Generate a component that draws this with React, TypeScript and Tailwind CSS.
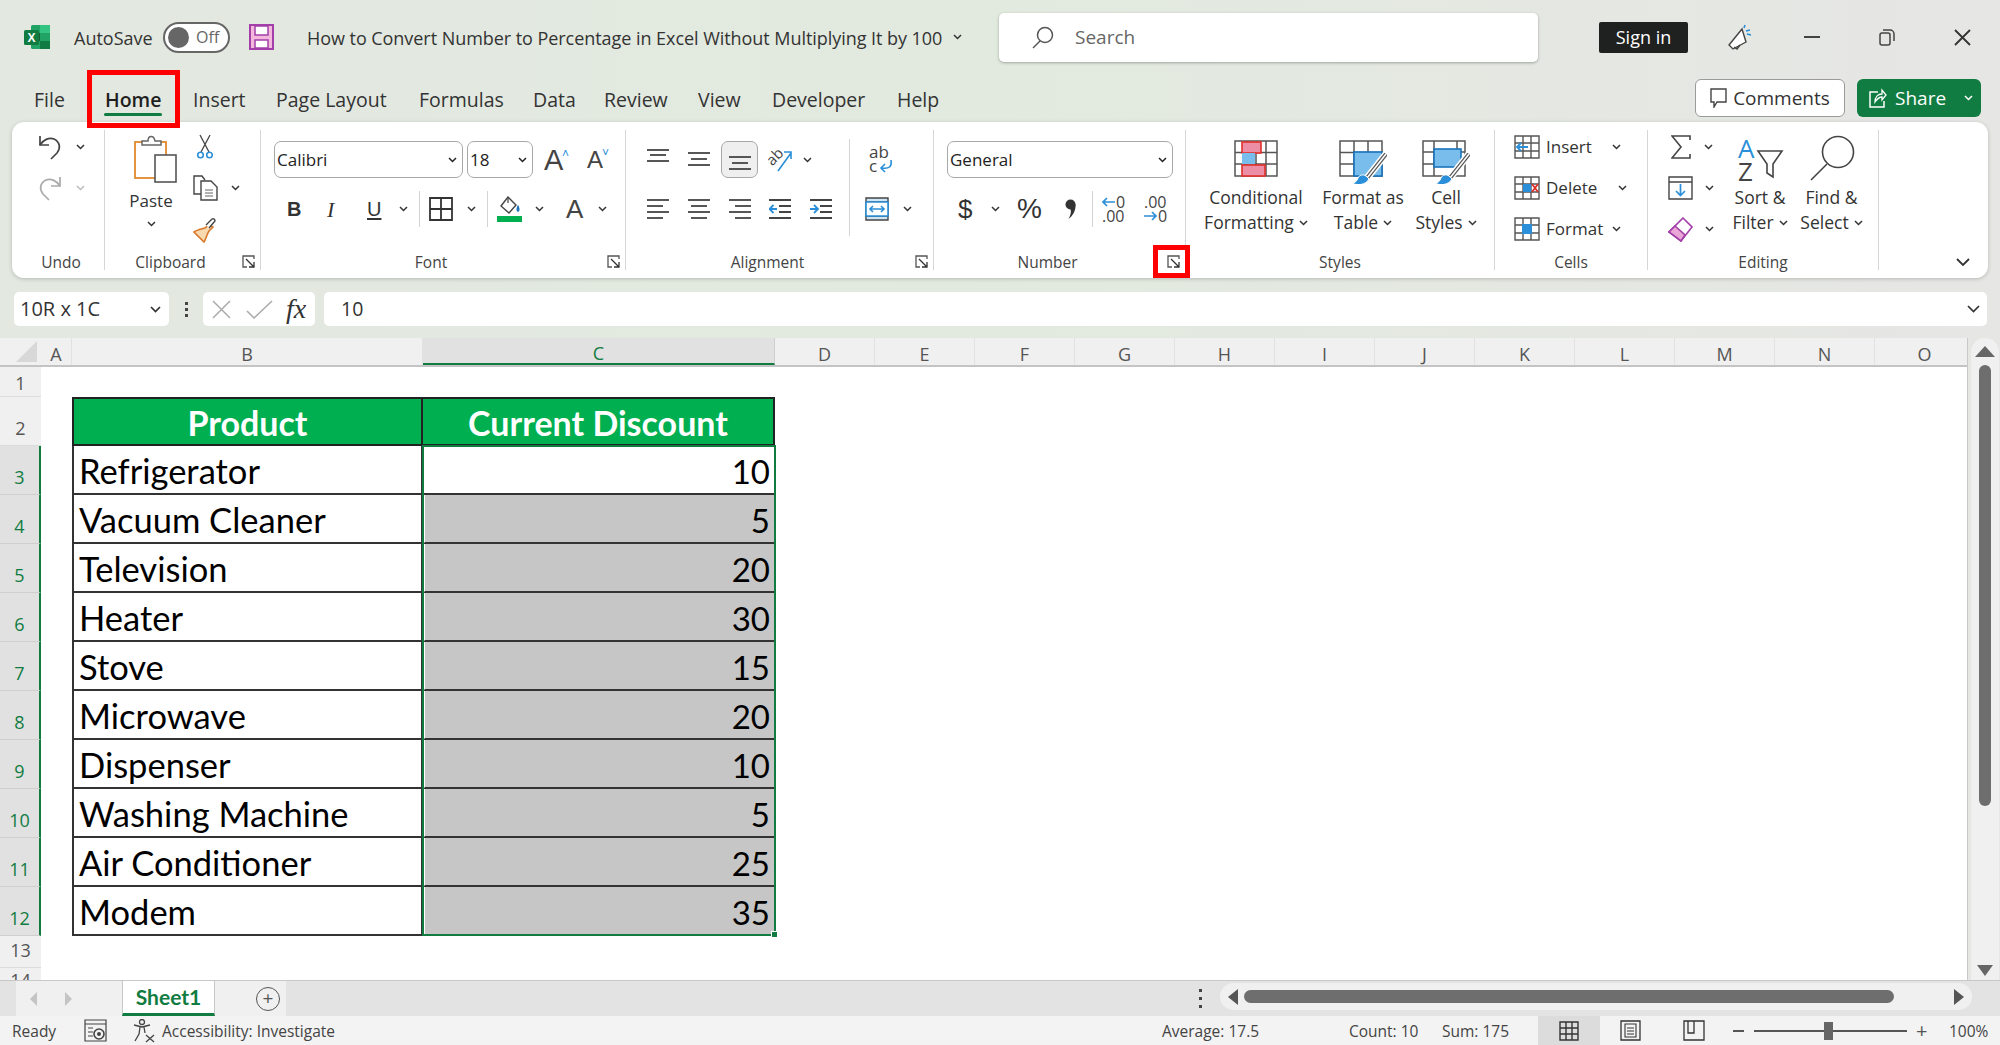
import { FC, ReactNode } from "react";

const ui = "font-['Open_Sans',sans-serif]";

// small dropdown chevron
const Chev: FC<{ cls?: string; color?: string }> = ({ cls = "", color = "#333" }) => (
	<svg width="9" height="6" viewBox="0 0 9 6" className={`shrink-0 ${cls}`}>
		<path d="M1 1l3.5 3.5L8 1" fill="none" stroke={color} strokeWidth="1.5" />
	</svg>
);

const Launcher: FC = () => (
	<svg width="13" height="13" viewBox="0 0 13 13" className="absolute right-[5px] top-[9px]">
		<path d="M12 4V1H1v11h4" fill="none" stroke="#555" strokeWidth="1.3" />
		<path d="M4 4l8 8M12 7v5H7" fill="none" stroke="#333" strokeWidth="1.3" />
	</svg>
);

const Sep: FC<{ cls?: string }> = ({ cls = "" }) => <div className={`w-px h-[36px] bg-[#d4d4d4] shrink-0 ${cls}`} />;

const Group: FC<{ w: string; label: string; launcher?: boolean; labelCls?: string; children: ReactNode }> = ({ w, label, launcher, labelCls = "", children }) => (
	<div className={`${w} shrink-0 h-full flex flex-col border-r border-[#d6d6d6]`}>
		<div className="h-[120px] flex">{children}</div>
		<div className={`relative h-[24px] pt-[4px] text-center text-[15.5px] leading-[24px] text-[#444] ${labelCls}`}>
			{label}
			{launcher && <Launcher />}
		</div>
	</div>
);

// fake select box used in the ribbon
const Select: FC<{ w: string; ml: string; text: string }> = ({ w, ml, text }) => (
	<div className={`${w} ${ml} h-[37px] shrink-0 flex items-center justify-between bg-white border border-[#a8a8a8] rounded-[7px] pl-[2px] pr-[5px] text-[17px] text-[#222]`}>
		<span>{text}</span>
		<Chev color="#222" />
	</div>
);

// [x, width, y] for each bar of an alignment icon
const AlignLines: FC<{ lines: [number, number, number][] }> = ({ lines }) => (
	<svg width="22" height="22" viewBox="0 0 22 22" className="shrink-0">
		{lines.map(([x, w, y], i) => (
			<path key={i} d={`M${x} ${y}h${w}`} stroke="#444" strokeWidth="1.8" />
		))}
	</svg>
);

const Indent: FC<{ flip?: boolean }> = ({ flip }) => (
	<svg width="22" height="22" viewBox="0 0 22 22" className="shrink-0">
		<path d="M0 2h22M10 8h12M10 14h12M0 20h22" stroke="#444" strokeWidth="1.8" />
		{flip ? (
			<path d="M0 11h7M4 7l4 4-4 4" fill="none" stroke="#2a8fd8" strokeWidth="1.8" />
		) : (
			<path d="M8 11H1M4.5 7l-4 4 4 4" fill="none" stroke="#2a8fd8" strokeWidth="1.8" />
		)}
	</svg>
);

const ExcelLogo = () => (
	<svg width="26" height="26" viewBox="0 0 26 26" className="shrink-0">
		<rect x="7" y="1" width="19" height="24" rx="1.5" fill="#21a366" />
		<rect x="16" y="1" width="10" height="8" fill="#33c481" />
		<rect x="16" y="17" width="10" height="8" fill="#107c41" />
		<rect x="7" y="9" width="9" height="8" fill="#185c37" />
		<rect x="0" y="6" width="15" height="15" rx="1.5" fill="#107c41" />
		<text x="7.5" y="18" textAnchor="middle" fontSize="12" fontWeight="700" fill="#fff" fontFamily="Liberation Sans, sans-serif">X</text>
	</svg>
);

const SaveIcon = () => (
	<svg width="25" height="26" viewBox="0 0 25 26" className="shrink-0">
		<path d="M1 1h23v24H1z" fill="#f3b8dc" stroke="#a23fa8" strokeWidth="2" />
		<rect x="6" y="2" width="13" height="9" fill="#fff" stroke="#a23fa8" strokeWidth="1.5" />
		<rect x="6" y="16" width="13" height="8" fill="#fff" stroke="#a23fa8" strokeWidth="1.5" />
	</svg>
);

const CondFmtIcon = () => (
	<svg width="45" height="37" viewBox="0 0 45 37">
		<path d="M1 1h42v35H1zM1 12.5h42M1 24h42M12 1v35M22 1v35M32 1v35" fill="#fff" stroke="#555" strokeWidth="1.5" />
		<rect x="8" y="2" width="19" height="11" fill="#ec8fa6" stroke="#e0302a" strokeWidth="1.6" />
		<rect x="8" y="13" width="13" height="11" fill="#78bdeb" />
		<rect x="8" y="25" width="23" height="11" fill="#ec8fa6" stroke="#e0302a" strokeWidth="1.6" />
	</svg>
);

const Brush = () => (
	<>
		<path d="M47 14L28 38" stroke="#fff" strokeWidth="7" />
		<path d="M47 14L28 38" stroke="#555" strokeWidth="4" />
		<path d="M47 14L28 38" stroke="#fff" strokeWidth="1.6" />
		<path d="M27 36c-3-2-7-1-8 2-1 3-3 5-6 5 5 3 14 2 17-4z" fill="#2a8fd8" stroke="#fff" strokeWidth="1" />
	</>
);

const FmtTableIcon = () => (
	<svg width="48" height="44" viewBox="0 0 48 44">
		<path d="M1 1h42v35H1zM1 12.5h42M1 24h42M15 1v35M29 1v35" fill="#fff" stroke="#555" strokeWidth="1.5" />
		<rect x="15" y="12" width="28" height="24" fill="#78bdeb" stroke="#1a73bb" strokeWidth="1.6" />
		<Brush />
	</svg>
);

const CellStyleIcon = () => (
	<svg width="48" height="44" viewBox="0 0 48 44">
		<path d="M1 1h42v35H1zM1 12h42M1 24h14M12 1v35M35 1v11" fill="#fff" stroke="#555" strokeWidth="1.5" />
		<rect x="12" y="9" width="27" height="18" fill="#78bdeb" stroke="#1a73bb" strokeWidth="1.6" />
		<Brush />
	</svg>
);

const GridCell: FC<{ children?: ReactNode }> = ({ children }) => (
	<svg width="26" height="24" viewBox="0 0 26 24" className="shrink-0">
		<path d="M1 1h24v22H1zM1 8h24M1 16h24M9 1v22M17 1v22" fill="#fff" stroke="#555" strokeWidth="1.4" />
		{children}
	</svg>
);

const Styled: FC<{ w: string; ml?: string; icon: ReactNode; l1: string; l2: string }> = ({ w, ml = "", icon, l1, l2 }) => (
	<div className={`${w} ${ml} shrink-0 flex flex-col items-center`}>
		<div className="h-[55px] pt-[10px] flex items-start">{icon}</div>
		<div className="text-[17.5px] leading-[25px] text-[#333] whitespace-nowrap">{l1}</div>
		<div className="text-[17.5px] leading-[25px] text-[#333] whitespace-nowrap flex items-center gap-[5px]">
			{l2}
			<Chev />
		</div>
	</div>
);

const tabs: [string, string][] = [
	["File", "w-[71px]"],
	["Home", "w-[88px]"],
	["Insert", "w-[83px]"],
	["Page Layout", "w-[143px]"],
	["Formulas", "w-[114px]"],
	["Data", "w-[71px]"],
	["Review", "w-[94px]"],
	["View", "w-[74px]"],
	["Developer", "w-[125px]"],
	["Help", "w-[60px]"],
];

const colHeaders: [string, string][] = [
	["A", "w-[31px]"],
	["B", "w-[351px]"],
	["C", "w-[352px]"],
	["D", "w-[100px]"],
	["E", "w-[100px]"],
	["F", "w-[100px]"],
	["G", "w-[100px]"],
	["H", "w-[100px]"],
	["I", "w-[100px]"],
	["J", "w-[100px]"],
	["K", "w-[100px]"],
	["L", "w-[100px]"],
	["M", "w-[100px]"],
	["N", "w-[100px]"],
	["O", "w-[100px]"],
];

const products: [string, number][] = [
	["Refrigerator", 10],
	["Vacuum Cleaner", 5],
	["Television", 20],
	["Heater", 30],
	["Stove", 15],
	["Microwave", 20],
	["Dispenser", 10],
	["Washing Machine", 5],
	["Air Conditioner", 25],
	["Modem", 35],
];

const RowHead: FC<{ n: number; h: string; pb?: string; sel?: boolean }> = ({ n, h, pb = "pb-[5px]", sel }) => (
	<div className={`${h} ${pb} w-[41px] shrink-0 flex items-end justify-center text-[18px] leading-[24px] border-b ${sel ? "bg-[#e1e1e1] text-[#107c41] border-[#cfcfcf] border-r-2 border-r-[#107c41]" : "bg-[#f0f0f0] text-[#555] border-[#dcdcdc]"}`}>
		{n}
	</div>
);

export default function App() {
	return (
		<div className={`relative w-[2000px] h-[1045px] overflow-hidden flex flex-col bg-gradient-to-r from-[#e3e8e1] via-[#e2eadf] to-[#e6e6e4] ${ui}`}>
			{/* Title bar */}
			<div className="h-[72px] shrink-0 flex items-center text-[#333] pt-[2px]">
				<div className="ml-[24px]"><ExcelLogo /></div>
				<div className="ml-[24px] w-[79px] pt-[2px] text-[18px] whitespace-nowrap">AutoSave</div>
				<div className="ml-[10px] w-[67px] h-[31px] rounded-full border-2 border-[#666] bg-white flex items-center pl-[3px] gap-[7px] text-[16px] text-[#666]">
					<div className="w-[21px] h-[21px] rounded-full bg-[#666]" />
					Off
				</div>
				<div className="ml-[19px]"><SaveIcon /></div>
				<div className="ml-[33px] w-[634px] pt-[2px] text-[18px] whitespace-nowrap tracking-[-0.05px]">How to Convert Number to Percentage in Excel Without Multiplying It by 100</div>
				<Chev cls="ml-[12px]" />
				<div className="ml-[37px] w-[539px] h-[49px] bg-white rounded-[5px] shadow-[0_1px_3px_rgba(0,0,0,0.3)] flex items-center pl-[33px] text-[19px] text-[#666]">
					<svg width="22" height="23" viewBox="0 0 22 23" className="shrink-0">
						<circle cx="13" cy="9" r="7.5" fill="none" stroke="#555" strokeWidth="1.5" />
						<path d="M8 15l-7 7" stroke="#555" strokeWidth="1.5" />
					</svg>
					<span className="ml-[21px]">Search</span>
				</div>
				<div className="ml-[61px] w-[89px] h-[31px] bg-[#1f2020] rounded-[2px] text-white text-[18px] flex items-center justify-center">Sign in</div>
				<svg width="24" height="26" viewBox="0 0 24 26" className="ml-[40px] shrink-0">
					<path d="M14 5L1 21l4 4 13-7z" fill="#fff" stroke="#444" strokeWidth="1.4" />
					<path d="M6 23l3 2 3-4" fill="none" stroke="#444" strokeWidth="1.4" />
					<path d="M18 7l4-1M16 4l1-3M19 10l4 1" stroke="#2a8fd8" strokeWidth="1.6" />
				</svg>
				<div className="ml-[52px] w-[16px] h-[2px] bg-[#444]" />
				<svg width="16" height="17" viewBox="0 0 16 17" className="ml-[59px] shrink-0">
					<rect x="1" y="4" width="10" height="12" rx="2" fill="none" stroke="#444" strokeWidth="1.5" />
					<path d="M4 1h7a4 4 0 0 1 4 4v7" fill="none" stroke="#444" strokeWidth="1.5" />
				</svg>
				<svg width="17" height="17" viewBox="0 0 17 17" className="ml-[59px] shrink-0">
					<path d="M1 1l15 15M16 1L1 16" stroke="#333" strokeWidth="1.8" />
				</svg>
			</div>

			{/* Menu tabs */}
			<div className="h-[50px] shrink-0 flex pl-[34px] pt-[7px] text-[19.5px] text-[#333]">
				{tabs.map(([t, w]) => (
					<div key={t} className={`${w} shrink-0 whitespace-nowrap pt-[6px]`}>
						<span className={t === "Home" ? "relative font-semibold text-[#1f1f1f]" : ""}>
							{t}
							{t === "Home" && <span className="absolute left-[-1px] right-[-1px] top-[27px] h-[3px] rounded-full bg-[#107c41]" />}
						</span>
					</div>
				))}
				<div className="ml-[738px] w-[150px] h-[38px] bg-white border border-[#9a9a9a] rounded-[6px] flex items-center justify-center gap-[6px] text-[19px] shrink-0">
					<svg width="17" height="20" viewBox="0 0 17 20">
						<path d="M1 1h15v13H7l-3 5v-5H1z" fill="none" stroke="#444" strokeWidth="1.4" />
					</svg>
					Comments
				</div>
				<div className="ml-[12px] w-[124px] h-[38px] bg-[#107c41] rounded-[6px] flex items-center pl-[12px] text-white text-[19px] shrink-0">
					<svg width="18" height="20" viewBox="0 0 18 20" className="shrink-0">
						<path d="M9 4H1v15h14v-6" fill="none" stroke="#fff" strokeWidth="1.5" />
						<path d="M6 14c0-5 3-8 7-8V2l4 5-4 5V9c-3 0-5 2-7 5z" fill="none" stroke="#fff" strokeWidth="1.3" />
					</svg>
					<span className="ml-[8px] w-[51px]">Share</span>
					<Chev cls="ml-[18px]" color="#fff" />
				</div>
			</div>

			{/* Ribbon */}
			<div className="h-[156px] shrink-0 mx-[12px] bg-white rounded-[12px] shadow-[0_1px_4px_rgba(0,0,0,0.2)] py-[8px] flex">
				<Group w="w-[93px]" label="Undo" labelCls="pl-[6px]">
					<div className="flex flex-col gap-[7px] pl-[26px]">
						<div className="h-[34px] flex items-center">
							<svg width="24" height="26" viewBox="0 0 24 26" className="shrink-0">
								<path d="M2 2v9h9" fill="none" stroke="#444" strokeWidth="1.7" />
								<path d="M2 11c3-5 9-8 14-6 6 3 7 9 3 14l-6 6" fill="none" stroke="#444" strokeWidth="1.7" />
							</svg>
							<Chev cls="ml-[14px]" />
						</div>
						<div className="h-[34px] flex items-center">
							<svg width="24" height="26" viewBox="0 0 24 26" className="shrink-0">
								<path d="M22 2v9h-9" fill="none" stroke="#aaa" strokeWidth="1.7" />
								<path d="M22 11c-3-5-9-8-14-6-6 3-7 9-3 14l6 6" fill="none" stroke="#aaa" strokeWidth="1.7" />
							</svg>
							<Chev cls="ml-[14px]" color="#bbb" />
						</div>
					</div>
				</Group>

				<Group w="w-[156px]" label="Clipboard" launcher labelCls="pr-[24px]">
					<div className="ml-[18px] w-[56px] flex flex-col items-center shrink-0 pt-[5px]">
						<svg width="44" height="48" viewBox="0 0 44 48" className="ml-[10px]">
							<rect x="1" y="7" width="31" height="36" fill="#fff" stroke="#e08a2e" strokeWidth="1.8" />
							<path d="M8 10V6h6c0-6 6-6 7 0h6v4z" fill="#fff" stroke="#666" strokeWidth="1.5" />
							<rect x="21" y="20" width="21" height="27" fill="#fff" stroke="#555" strokeWidth="1.6" />
						</svg>
						<div className="mt-[6px] text-[17px] leading-[24px] text-[#333]">Paste</div>
						<Chev cls="mt-[8px]" />
					</div>
					<div className="ml-[14px] flex flex-col gap-[7px]">
						<div className="h-[34px] flex items-center pl-[4px]">
							<svg width="16" height="26" viewBox="0 0 16 26">
								<path d="M3 1l9 17M13 1L4 18" fill="none" stroke="#444" strokeWidth="1.3" />
								<circle cx="3.5" cy="21" r="2.8" fill="none" stroke="#2a8fd8" strokeWidth="1.6" />
								<circle cx="12.5" cy="21" r="2.8" fill="none" stroke="#2a8fd8" strokeWidth="1.6" />
							</svg>
						</div>
						<div className="h-[34px] flex items-center">
							<svg width="25" height="26" viewBox="0 0 25 26" className="shrink-0">
								<path d="M8 19H1V1h8l3 4" fill="none" stroke="#444" strokeWidth="1.4" />
								<path d="M8 6h10l6 6v13H8z" fill="#fff" stroke="#444" strokeWidth="1.4" />
								<path d="M12 15h8M12 18h8M12 21h8" stroke="#666" strokeWidth="1" />
							</svg>
							<Chev cls="ml-[13px]" />
						</div>
						<div className="h-[34px] flex items-center">
							<svg width="25" height="27" viewBox="0 0 25 27" className="shrink-0">
								<path d="M16 8l-4 4c-3 1-8 2-11 4l10 10c2-3 3-8 5-11l4-4z" fill="#f8d9b0" stroke="#d9782a" strokeWidth="1.6" />
								<path d="M16 12l6-7a2 2 0 0 0-3-2l-6 6" fill="#fff" stroke="#444" strokeWidth="1.4" />
							</svg>
						</div>
					</div>
				</Group>

				<Group w="w-[365px]" label="Font" launcher labelCls="pr-[24px]">
					<div className="flex flex-col pt-[11px]">
						<div className="flex items-center h-[37px]">
							<Select w="w-[189px]" ml="ml-[13px]" text="Calibri" />
							<Select w="w-[66px]" ml="ml-[4px]" text="18" />
							<div className="ml-[11px] w-[24px] relative text-[29px] leading-[30px] text-[#444] font-['Liberation_Sans',sans-serif]">
								A<span className="absolute left-[18px] top-[-6px] text-[12px] text-[#2a8fd8]">˄</span>
							</div>
							<div className="ml-[19px] w-[21px] relative text-[24px] leading-[30px] text-[#444] font-['Liberation_Sans',sans-serif]">
								A<span className="absolute left-[15px] top-[-7px] text-[12px] text-[#2a8fd8]">˅</span>
							</div>
						</div>
						<div className="flex items-center h-[36px] mt-[13px] text-[20px] text-[#333] font-['Liberation_Sans',sans-serif]">
							<div className="ml-[26px] w-[12px] font-bold">B</div>
							<div className="ml-[28px] w-[12px] italic font-['Liberation_Serif',serif] text-[22px]">I</div>
							<div className="ml-[28px] w-[13px] underline underline-offset-2">U</div>
							<Chev cls="ml-[19px]" />
							<Sep cls="ml-[11px]" />
							<svg width="24" height="24" viewBox="0 0 24 24" className="ml-[9px] shrink-0">
								<path d="M1 1h22v22H1zM1 12h22M12 1v22" fill="none" stroke="#333" strokeWidth="1.8" />
							</svg>
							<Chev cls="ml-[14px]" />
							<Sep cls="ml-[11px]" />
							<svg width="25" height="26" viewBox="0 0 25 26" className="ml-[9px] shrink-0">
								<path d="M11 1l8 8-7 8-8-7z" fill="#fff" stroke="#444" strokeWidth="1.4" />
								<path d="M11 1v6" stroke="#444" strokeWidth="1.2" />
								<path d="M21 9c2 3 2 6 0 7-2-1-2-4 0-7z" fill="#1a73bb" />
								<rect x="0" y="20" width="25" height="6" fill="#00b050" />
							</svg>
							<Chev cls="ml-[13px]" />
							<div className="ml-[22px] w-[16px] text-[26px] leading-[26px] text-[#444]">A</div>
							<Chev cls="ml-[16px]" />
						</div>
					</div>
				</Group>

				<Group w="w-[308px]" label="Alignment" launcher labelCls="pr-[24px]">
					<div className="w-[223px] shrink-0 flex flex-col pt-[11px]">
						<div className="flex items-center h-[37px]">
							<div className="ml-[21px]"><AlignLines lines={[[0, 22, 1], [3, 16, 6], [0, 22, 12]]} /></div>
							<div className="ml-[19px]"><AlignLines lines={[[0, 22, 4], [3, 16, 10], [0, 22, 16]]} /></div>
							<div className="ml-[11px] w-[37px] h-[37px] bg-[#efefef] border border-[#a8a8a8] rounded-[7px] flex items-center justify-center">
								<AlignLines lines={[[0, 22, 8], [3, 16, 14], [0, 22, 20]]} />
							</div>
							<svg width="26" height="24" viewBox="0 0 26 24" className="ml-[9px] shrink-0 overflow-visible">
								<text x="0" y="14" fontSize="15" fill="#444" transform="rotate(-45 8 10)" fontFamily="Open Sans, sans-serif">ab</text>
								<path d="M11 23L24 5M17 4h7v7" fill="none" stroke="#2a8fd8" strokeWidth="1.6" />
							</svg>
							<Chev cls="ml-[10px]" />
						</div>
						<div className="flex items-center h-[36px] mt-[13px]">
							<div className="ml-[21px]"><AlignLines lines={[[0, 22, 2], [0, 16, 8], [0, 22, 14], [0, 16, 20]]} /></div>
							<div className="ml-[19px]"><AlignLines lines={[[0, 22, 2], [3, 16, 8], [0, 22, 14], [3, 16, 20]]} /></div>
							<div className="ml-[19px]"><AlignLines lines={[[0, 22, 2], [6, 16, 8], [0, 22, 14], [6, 16, 20]]} /></div>
							<div className="ml-[18px]"><Indent /></div>
							<div className="ml-[19px]"><Indent flip /></div>
						</div>
					</div>
					<Sep cls="h-[97px]! mt-[9px]" />
					<div className="flex flex-col pt-[11px]">
						<div className="h-[37px] flex items-center pl-[19px]">
							<svg width="24" height="28" viewBox="0 0 24 28" className="overflow-visible">
								<text x="0" y="12" fontSize="17" fill="#444" fontFamily="Open Sans, sans-serif">ab</text>
								<text x="0" y="26" fontSize="17" fill="#444" fontFamily="Open Sans, sans-serif">c</text>
								<path d="M22 14c1 7-2 9-9 8M16 18l-4 4 4 4" fill="none" stroke="#2a8fd8" strokeWidth="1.6" />
							</svg>
						</div>
						<div className="h-[36px] mt-[13px] flex items-center pl-[15px]">
							<svg width="24" height="24" viewBox="0 0 24 24" className="shrink-0">
								<path d="M1 1h22v22H1z" fill="#cfe6f7" stroke="#444" strokeWidth="1.4" />
								<path d="M1 5h22M1 19h22" stroke="#444" strokeWidth="1.4" />
								<path d="M1 5h22v14H1z" fill="#fff" stroke="#2a8fd8" strokeWidth="1.6" />
								<path d="M5 12h14M8 9l-3 3 3 3M16 9l3 3-3 3" fill="none" stroke="#2a8fd8" strokeWidth="1.6" />
							</svg>
							<Chev cls="ml-[14px]" />
						</div>
					</div>
				</Group>

				<Group w="w-[252px]" label="Number" launcher labelCls="pr-[24px]">
					<div className="flex flex-col pt-[11px]">
						<Select w="w-[226px]" ml="ml-[13px]" text="General" />
						<div className="flex items-center h-[36px] mt-[13px] text-[#333]">
							<div className="ml-[24px] w-[14px] text-[26px] leading-[30px] font-['Liberation_Sans',sans-serif]">$</div>
							<Chev cls="ml-[19px]" />
							<div className="ml-[17px] w-[24px] text-[28px] leading-[30px] font-['Liberation_Sans',sans-serif]">%</div>
							<svg width="11" height="21" viewBox="0 0 11 21" className="ml-[24px] shrink-0">
								<circle cx="5.5" cy="5.5" r="5" fill="#333" />
								<path d="M10.5 5c.5 7-3 12-7 15 2-4 3-7 2-10z" fill="#333" />
							</svg>
							<Sep cls="ml-[16px]" />
							<svg width="24" height="28" viewBox="0 0 24 28" className="ml-[9px] shrink-0 overflow-visible">
								<path d="M13 7H1M5 3L1 7l4 4" fill="none" stroke="#2a8fd8" strokeWidth="1.7" />
								<text x="14" y="13" fontSize="16" fill="#444" fontFamily="Open Sans, sans-serif">0</text>
								<text x="0" y="27" fontSize="16" fill="#444" fontFamily="Open Sans, sans-serif">.00</text>
							</svg>
							<svg width="25" height="28" viewBox="0 0 25 28" className="ml-[17px] shrink-0 overflow-visible">
								<text x="1" y="13" fontSize="16" fill="#444" fontFamily="Open Sans, sans-serif">.00</text>
								<path d="M1 21h12M9 17l4 4-4 4" fill="none" stroke="#2a8fd8" strokeWidth="1.7" />
								<text x="15" y="27" fontSize="16" fill="#444" fontFamily="Open Sans, sans-serif">0</text>
							</svg>
						</div>
					</div>
				</Group>

				<Group w="w-[309px]" label="Styles">
					<Styled w="w-[120px]" ml="ml-[10px]" icon={<CondFmtIcon />} l1="Conditional" l2="Formatting" />
					<Styled w="w-[94px]" icon={<FmtTableIcon />} l1="Format as" l2="Table" />
					<Styled w="w-[72px]" icon={<CellStyleIcon />} l1="Cell" l2="Styles" />
				</Group>

				<Group w="w-[153px]" label="Cells">
					<div className="flex flex-col gap-[7px] pl-[19px] text-[17px] text-[#333]">
						<div className="h-[34px] flex items-center">
							<GridCell>
								<path d="M14 12H3M7 8l-4 4 4 4" fill="none" stroke="#2a8fd8" strokeWidth="1.8" />
							</GridCell>
							<span className="ml-[6px] w-[66px]">Insert</span>
							<Chev />
						</div>
						<div className="h-[34px] flex items-center">
							<GridCell>
								<rect x="9" y="8" width="8" height="8" fill="#2a8fd8" />
								<path d="M18 8l6 8M24 8l-6 8" stroke="#e0302a" strokeWidth="1.8" />
							</GridCell>
							<span className="ml-[6px] w-[72px]">Delete</span>
							<Chev />
						</div>
						<div className="h-[34px] flex items-center">
							<GridCell>
								<rect x="8" y="7" width="10" height="10" fill="#2a8fd8" />
							</GridCell>
							<span className="ml-[6px] w-[66px]">Format</span>
							<Chev />
						</div>
					</div>
				</Group>

				<Group w="w-[231px]" label="Editing">
					<div className="ml-[20px] w-[57px] shrink-0 flex flex-col gap-[7px]">
						<div className="h-[34px] flex items-center pl-[3px]">
							<svg width="20" height="24" viewBox="0 0 20 24" className="shrink-0">
								<path d="M19 5V1H1l9 11-9 11h18v-4" fill="none" stroke="#444" strokeWidth="1.6" />
							</svg>
							<Chev cls="ml-[13px]" />
						</div>
						<div className="h-[34px] flex items-center">
							<svg width="25" height="24" viewBox="0 0 25 24" className="shrink-0">
								<path d="M1 1h23v22H1zM1 6h23" fill="#fff" stroke="#444" strokeWidth="1.4" />
								<path d="M12.5 8v11M8 15l4.5 4.5L17 15" fill="none" stroke="#2a8fd8" strokeWidth="1.7" />
							</svg>
							<Chev cls="ml-[12px]" />
						</div>
						<div className="h-[34px] flex items-center">
							<svg width="25" height="25" viewBox="0 0 25 25" className="shrink-0">
								<path d="M15 1l9 9-11 14-12-9z" fill="#fff" stroke="#a23fa8" strokeWidth="1.6" />
								<path d="M7 9l10 9-4 6-12-9z" fill="#e9a6d6" stroke="#a23fa8" strokeWidth="1.6" />
							</svg>
							<Chev cls="ml-[12px]" />
						</div>
					</div>
					<Styled
						w="w-[70px]"
						icon={
							<svg width="46" height="46" viewBox="0 0 46 46" className="-mt-[4px] overflow-visible">
								<text x="1" y="22" fontSize="26" fill="#2a8fd8" fontFamily="Open Sans, sans-serif">A</text>
								<text x="1" y="45" fontSize="26" fill="#444" fontFamily="Open Sans, sans-serif">Z</text>
								<path d="M21 15h24l-9 13v13l-6-4v-9z" fill="#fff" stroke="#444" strokeWidth="1.6" />
							</svg>
						}
						l1="Sort &"
						l2="Filter"
					/>
					<Styled
						w="w-[73px]"
						icon={
							<svg width="46" height="46" viewBox="0 0 46 46" className="-mt-[5px]">
								<circle cx="29" cy="17" r="15.5" fill="none" stroke="#444" strokeWidth="1.6" />
								<path d="M18 29L2 45" stroke="#444" strokeWidth="1.6" />
							</svg>
						}
						l1="Find &"
						l2="Select"
					/>
				</Group>

				<div className="flex-1 flex items-end justify-end pr-[18px] pb-[3px]">
					<svg width="14" height="9" viewBox="0 0 14 9">
						<path d="M1 1l6 6 6-6" fill="none" stroke="#333" strokeWidth="1.8" />
					</svg>
				</div>
			</div>

			{/* Formula bar */}
			<div className="h-[34px] shrink-0 mt-[14px] flex text-[19.5px] text-[#333]">
				<div className="ml-[14px] w-[155px] bg-white rounded-[5px] flex items-center justify-between pl-[6px] pr-[8px] text-[20px]">
					10R x 1C
					<svg width="11" height="7" viewBox="0 0 11 7"><path d="M1 1l4.5 4.5L10 1" fill="none" stroke="#333" strokeWidth="1.7" /></svg>
				</div>
				<div className="w-[34px] flex flex-col items-center justify-center gap-[3px]">
					<div className="w-[3px] h-[3px] bg-[#444]" />
					<div className="w-[3px] h-[3px] bg-[#444]" />
					<div className="w-[3px] h-[3px] bg-[#444]" />
				</div>
				<div className="w-[112px] bg-white rounded-[5px] flex items-center pl-[9px]">
					<svg width="19" height="19" viewBox="0 0 19 19" className="shrink-0">
						<path d="M1 1l17 17M18 1L1 18" stroke="#aaa" strokeWidth="1.5" />
					</svg>
					<svg width="27" height="19" viewBox="0 0 27 19" className="ml-[15px] shrink-0">
						<path d="M1 11l7 7L26 1" fill="none" stroke="#aaa" strokeWidth="1.5" />
					</svg>
					<span className="ml-[13px] italic text-[28px] leading-[24px] text-[#333] font-['Liberation_Serif',serif]">fx</span>
				</div>
				<div className="ml-[9px] flex-1 mr-[13px] bg-white rounded-[5px] flex items-center justify-between pl-[17px] pr-[7px]">
					10
					<svg width="13" height="8" viewBox="0 0 13 8"><path d="M1 1l5.5 5.5L12 1" fill="none" stroke="#333" strokeWidth="1.7" /></svg>
				</div>
			</div>

			{/* Sheet */}
			<div className="h-[642px] shrink-0 mt-[12px] flex">
				<div className="w-[1968px] shrink-0 flex flex-col border-r border-[#c8c8c8]">
					<div className="h-[29px] shrink-0 flex overflow-hidden border-b-2 border-[#c4c4c4] bg-[#f0f0f0] text-[18px] text-[#555]">
						<div className="w-[41px] shrink-0 flex items-end justify-end pr-[4px] pb-[3px]">
							<div className="w-0 h-0 border-l-[21px] border-l-transparent border-b-[21px] border-b-[#d8d8d8]" />
						</div>
						{colHeaders.map(([c, w]) => (
							<div
								key={c}
								className={`${w} shrink-0 flex items-center justify-center pt-[5px] border-r ${c === "C" ? "bg-[#e1e1e1] text-[#107c41] border-[#cfcfcf] border-b-2 border-b-[#107c41]" : "border-[#e2e2e2]"}`}
							>
								{c}
							</div>
						))}
					</div>
					<div className="flex-1 flex bg-white overflow-hidden">
						<div className="w-[41px] shrink-0 flex flex-col bg-[#f0f0f0]">
							<RowHead n={1} h="h-[30px]" pb="pb-[1px]" />
							<RowHead n={2} h="h-[49px]" />
							{products.map((_, i) => (
								<RowHead key={i} n={i + 3} h="h-[49px]" sel />
							))}
							<RowHead n={13} h="h-[32px]" />
							<RowHead n={14} h="h-[30px]" />
						</div>
						<div className="ml-[31px] mt-[30px] w-[703px] h-[539px] relative">
							<div className="flex h-[49px] bg-[#00b050] text-white text-[34px] font-bold font-['Lato',sans-serif] border-t-2 border-b-2 border-l-2 border-r-2 border-[#222]">
								<div className="w-[349px] shrink-0 flex items-center justify-center pt-[2px] border-r-2 border-[#222]">Product</div>
								<div className="flex-1 flex items-center justify-center pt-[2px]">Current Discount</div>
							</div>
							{products.map(([name, v], i) => (
								<div key={name} className="flex h-[49px] text-black font-['Lato',sans-serif]">
									<div className="w-[351px] shrink-0 flex items-center pl-[5px] pt-[3px] text-[34.5px] bg-white border-l-2 border-r-2 border-b-2 border-[#333]">{name}</div>
									<div className={`flex-1 flex items-center justify-end pr-[5px] pt-[5px] text-[33px] border-b-2 border-[#333] ${i === 0 ? "bg-white" : "bg-[#c6c6c6] border-l-2 border-l-white"}`}>{v}</div>
								</div>
							))}
							<div className="absolute left-[350px] top-[48px] w-[354px] h-[491px] border-2 border-[#107c41]" />
							<div className="absolute left-[699px] top-[534px] w-[7px] h-[7px] bg-[#107c41] border border-white" />
						</div>
					</div>
				</div>
				<div className="ml-[3px] w-[28px] shrink-0 h-full rounded-t-full bg-[#f0f0f0] flex flex-col items-center pt-[8px]">
					<div className="w-0 h-0 border-l-[10px] border-r-[10px] border-b-[11px] border-l-transparent border-r-transparent border-b-[#666]" />
					<div className="mt-[8px] w-[12px] h-[441px] rounded-full bg-[#6e6e6e]" />
					<div className="mt-auto mb-[4px] w-0 h-0 border-l-[8px] border-r-[8px] border-t-[11px] border-l-transparent border-r-transparent border-t-[#666]" />
				</div>
			</div>

			{/* Sheet tabs + horizontal scrollbar */}
			<div className="h-[36px] shrink-0 flex bg-[#e3e3e3] border-t border-[#c8c8c8]">
				<div className="ml-[16px] w-[106px] bg-[#f0f0f0] flex items-center pl-[14px] gap-[28px]">
					<div className="w-0 h-0 border-r-[7px] border-y-[7px] border-y-transparent border-r-[#c4c4c4]" />
					<div className="w-0 h-0 border-l-[7px] border-y-[7px] border-y-transparent border-l-[#c4c4c4]" />
				</div>
				<div className="w-[93px] bg-white border-x border-[#c8c8c8] border-b-[3px] border-b-[#107c41] flex items-center justify-center text-[21px] font-bold text-[#107c41] font-['Lato',sans-serif]">Sheet1</div>
				<div className="w-[71px] bg-[#f0f0f0] flex items-center pl-[41px]">
					<div className="w-[24px] h-[24px] rounded-full border border-[#555] flex items-center justify-center text-[19px] leading-none text-[#555]">+</div>
				</div>
				<div className="ml-[909px] w-[10px] flex flex-col items-center justify-center gap-[5px]">
					<div className="w-[3px] h-[3px] bg-[#444]" />
					<div className="w-[3px] h-[3px] bg-[#444]" />
					<div className="w-[3px] h-[3px] bg-[#444]" />
				</div>
				<div className="ml-[15px] mt-[2px] w-[752px] h-[27px] bg-[#f0f0f0] rounded-full flex items-center pl-[8px]">
					<div className="w-0 h-0 border-r-[10px] border-y-[8px] border-y-transparent border-r-[#555]" />
					<div className="ml-[6px] w-[650px] h-[13px] rounded-full bg-[#6e6e6e]" />
					<div className="ml-[60px] w-0 h-0 border-l-[10px] border-y-[8px] border-y-transparent border-l-[#555]" />
				</div>
			</div>

			{/* Status bar */}
			<div className="h-[29px] shrink-0 flex items-center bg-[#f3f3f3] text-[15.5px] text-[#444]">
				<div className="ml-[12px] w-[44px] pt-[3px]">Ready</div>
				<svg width="23" height="23" viewBox="0 0 23 23" className="ml-[28px] shrink-0">
					<path d="M1 1h21v21H1zM1 5h21M4 9h5M4 13h5M4 17h5" fill="none" stroke="#444" strokeWidth="1.2" />
					<circle cx="15" cy="15" r="5" fill="none" stroke="#444" strokeWidth="1.6" />
					<circle cx="15" cy="15" r="2" fill="#444" />
				</svg>
				<svg width="23" height="24" viewBox="0 0 23 24" className="ml-[26px] shrink-0">
					<circle cx="9" cy="3" r="2.5" fill="none" stroke="#444" strokeWidth="1.3" />
					<path d="M1 6l8 2 8-2M7 8l-1 7-4 7M11 8l1 6M13 16l8 7M21 16l-8 7" fill="none" stroke="#444" strokeWidth="1.3" />
				</svg>
				<div className="ml-[6px] w-[173px] pt-[3px] whitespace-nowrap">Accessibility: Investigate</div>
				<div className="ml-[827px] w-[98px] pt-[3px] whitespace-nowrap">Average: 17.5</div>
				<div className="ml-[89px] w-[69px] pt-[3px] whitespace-nowrap">Count: 10</div>
				<div className="ml-[24px] w-[68px] pt-[3px] whitespace-nowrap">Sum: 175</div>
				<div className="ml-[28px] w-[62px] h-full bg-[#dcdcdc] flex items-center justify-center">
					<svg width="20" height="20" viewBox="0 0 20 20">
						<path d="M1 1h18v18H1zM1 7h18M1 13h18M7 1v18M13 1v18" fill="none" stroke="#333" strokeWidth="1.4" />
					</svg>
				</div>
				<svg width="21" height="21" viewBox="0 0 21 21" className="ml-[20px] shrink-0">
					<path d="M1 1h19v19H1z" fill="none" stroke="#333" strokeWidth="1.3" />
					<path d="M5 4h11v13H5zM7 8h7M7 11h7M7 14h7" fill="none" stroke="#333" strokeWidth="1.1" />
				</svg>
				<svg width="22" height="21" viewBox="0 0 22 21" className="ml-[42px] shrink-0">
					<path d="M1 1h20v19H1zM11 1v12H5V1" fill="none" stroke="#333" strokeWidth="1.3" />
				</svg>
				<div className="ml-[28px] w-[11px] h-[2px] bg-[#555]" />
				<div className="ml-[10px] w-[153px] h-[2px] bg-[#555] relative">
					<div className="absolute left-[70px] top-[-8px] w-[9px] h-[18px] bg-[#666]" />
				</div>
				<div className="ml-[9px] text-[20px] leading-none text-[#555] w-[13px]">+</div>
				<div className="ml-[20px] pt-[3px] whitespace-nowrap">100%</div>
			</div>

			{/* Red highlight boxes from the tutorial */}
			<div className="absolute left-[87px] top-[70px] w-[93px] h-[58px] border-[5px] border-[#f00] pointer-events-none" />
			<div className="absolute left-[1153px] top-[245px] w-[37px] h-[33px] border-[5px] border-[#f00] pointer-events-none" />
		</div>
	);
}
